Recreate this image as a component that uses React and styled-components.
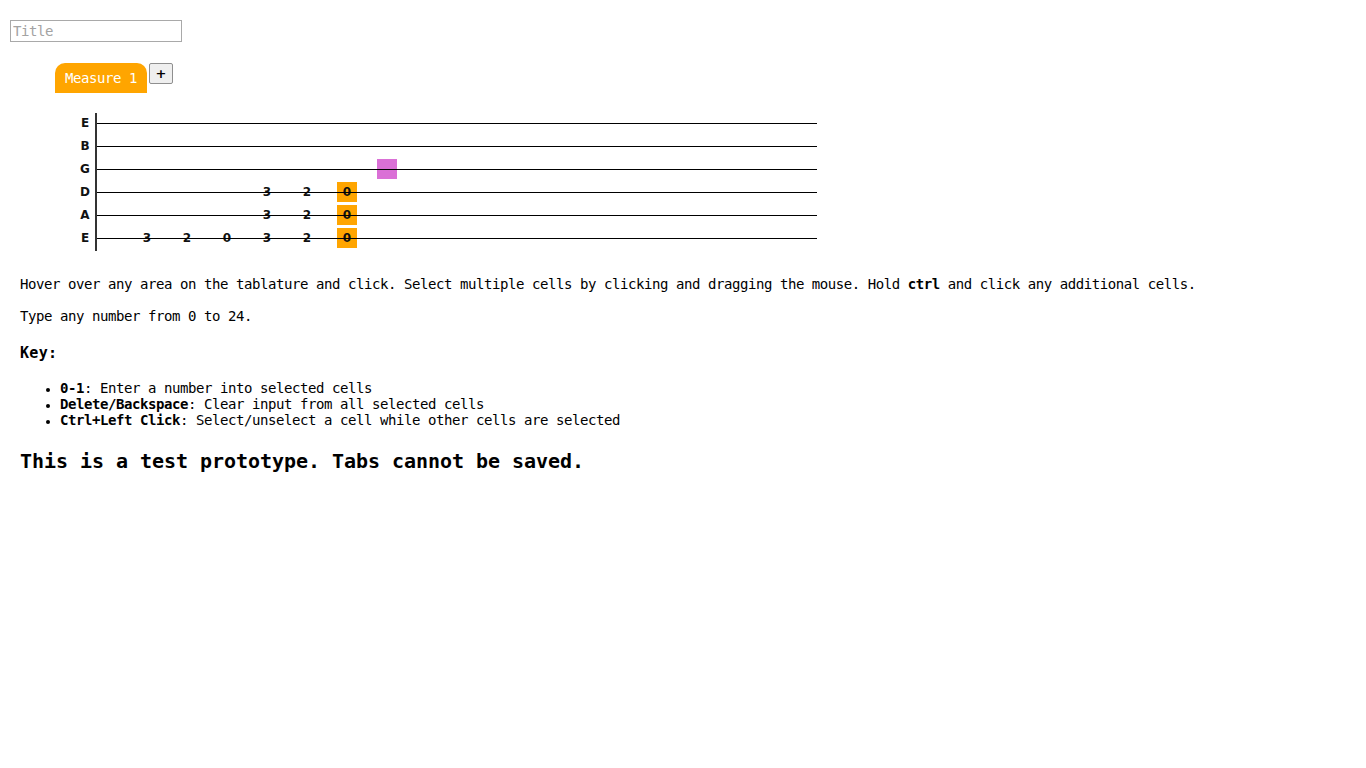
import React, { useState } from 'react';
import styled, { createGlobalStyle } from 'styled-components';

const GlobalStyle = createGlobalStyle`
  body {
    margin: 0;
    background: #fff;
    color: #000;
    font-family: "DejaVu Sans Mono", "Liberation Mono", monospace;
  }
`;

const Page = styled.div`
  padding-top: 20px;
`;

const TitleInput = styled.input`
  display: block;
  margin-left: 10px;
  width: 172px;
  height: 22px;
  box-sizing: border-box;
  border: 1px solid #a9a9a9;
  padding: 0 2px;
  font-family: "DejaVu Sans Mono", monospace;
  font-size: 14px;
  letter-spacing: -0.43px;
  outline: none;

  &::placeholder {
    color: #a3a3a3;
  }
`;

const TabBar = styled.div`
  display: flex;
  align-items: flex-start;
  gap: 2px;
  margin: 21px 0 0 55px;
`;

const Tab = styled.div`
  height: 30px;
  padding: 0 10px;
  display: flex;
  align-items: center;
  background: ${p => (p.$active ? '#ffa500' : '#ddd')};
  color: #fff;
  border-radius: 10px 10px 0 0;
  font-size: 14px;
  letter-spacing: -0.43px;
`;

const AddButton = styled.button`
  width: 24px;
  height: 21px;
  padding: 0;
  background: #efefef;
  border: 1px solid #8f8f8f;
  border-radius: 2px;
  font-family: "DejaVu Sans", sans-serif;
  font-size: 13px;
  font-weight: bold;
  color: #000;
  cursor: pointer;
`;

const Staff = styled.div`
  display: flex;
  margin: 20px 0 0 75px;
  font-family: "DejaVu Sans", Verdana, sans-serif;
  font-weight: bold;
`;

const Labels = styled.div`
  width: 20px;
  display: flex;
  flex-direction: column;
`;

const Label = styled.div`
  height: 23px;
  line-height: 20px;
  text-align: center;
  font-size: 12px;
  color: #111;
`;

const Grid = styled.div`
  border-left: 2px solid #333;
  display: flex;
  flex-direction: column;
`;

const StringRow = styled.div`
  position: relative;
  height: 23px;
  width: 720px;
  padding-left: 40px;
  box-sizing: border-box;
  display: flex;
  gap: 20px;

  &::after {
    content: '';
    position: absolute;
    left: 0;
    right: 0;
    top: 10px;
    height: 1px;
    background: #000;
    pointer-events: none;
  }
`;

const Cell = styled.div`
  width: 20px;
  height: 20px;
  display: flex;
  align-items: center;
  justify-content: center;
  font-size: 12px;
  color: #111;
  background: ${p => (p.$selected ? '#ffa500' : p.$hover ? '#da70d6' : 'transparent')};
  cursor: pointer;
`;

const Content = styled.div`
  padding-left: 20px;
  margin-top: 25px;
  font-size: 14px;
  letter-spacing: -0.43px;
  line-height: 16px;
`;

const Para = styled.p`
  margin: 0 0 16px;
`;

const KeyTitle = styled.h3`
  margin: 18px 0 0;
  font-size: 15px;
  letter-spacing: 0.33px;
  line-height: 22px;
`;

const KeyList = styled.ul`
  margin: 16px 0 0;
  padding-left: 40px;
  list-style: disc;

  li::marker {
    font-size: 12px;
  }
`;

const Notice = styled.h2`
  margin: 20px 0 0;
  font-size: 20px;
  letter-spacing: -0.04px;
  line-height: 26px;
`;

const strings = ['E', 'B', 'G', 'D', 'A', 'E'];

// notes per string, index = column
const notes = {
  3: { 3: '3', 4: '2', 5: '0' },
  4: { 3: '3', 4: '2', 5: '0' },
  5: { 0: '3', 1: '2', 2: '0', 3: '3', 4: '2', 5: '0' },
};

const selected = ['3-5', '4-5', '5-5'];

export default function App() {
  const [hover] = useState('2-6');

  return (
    <Page>
      <GlobalStyle />
      <TitleInput placeholder="Title" />
      <TabBar>
        <Tab $active>Measure 1</Tab>
        <AddButton>+</AddButton>
      </TabBar>

      <Staff>
        <Labels>
          {strings.map((s, i) => (
            <Label key={i}>{s}</Label>
          ))}
        </Labels>
        <Grid>
          {strings.map((s, row) => (
            <StringRow key={row}>
              {Array.from({ length: 17 }).map((_, col) => {
                const id = `${row}-${col}`;
                return (
                  <Cell key={col} $selected={selected.includes(id)} $hover={hover === id}>
                    {notes[row] && notes[row][col]}
                  </Cell>
                );
              })}
            </StringRow>
          ))}
        </Grid>
      </Staff>

      <Content>
        <Para>
          Hover over any area on the tablature and click. Select multiple cells by clicking and dragging the mouse. Hold <b>ctrl</b> and click any additional cells.
        </Para>
        <Para>Type any number from 0 to 24.</Para>
        <KeyTitle>Key:</KeyTitle>
        <KeyList>
          <li><b>0-1</b>: Enter a number into selected cells</li>
          <li><b>Delete/Backspace</b>: Clear input from all selected cells</li>
          <li><b>Ctrl+Left Click</b>: Select/unselect a cell while other cells are selected</li>
        </KeyList>
        <Notice>This is a test prototype. Tabs cannot be saved.</Notice>
      </Content>
    </Page>
  );
}
